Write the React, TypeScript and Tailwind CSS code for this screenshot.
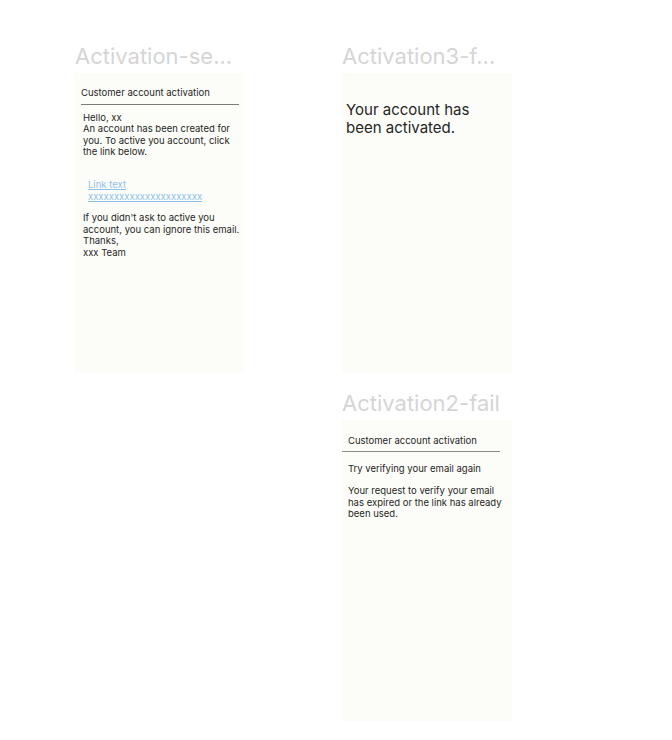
const font = { fontFamily: 'Inter, "Noto Sans", sans-serif' }

const Title = ({ children, className = '' }: { children: string; className?: string }) => (
  <div className={`h-[33px] text-[22px] leading-[33px] text-[#d5d5d5] whitespace-nowrap ${className}`}>
    {children}
  </div>
)

const Frame = ({ children, className = '' }: { children?: React.ReactNode; className?: string }) => (
  <div className={`bg-[#fcfdf8] text-[#262626] ${className}`}>{children}</div>
)

export default function App() {
  return (
    <div className="w-[672px] h-[740px] bg-white flex pt-[40px]" style={font}>
      <div className="ml-[75px] w-[169px] flex flex-col">
        <Title>Activation-se...</Title>
        <Frame className="h-[300px] pt-[14px] text-[9.5px] leading-[11.6px]">
          <div className="ml-[6px] mr-[5px] pb-[5px] border-b border-[#7a7a7a]">
            Customer account activation
          </div>
          <div className="pl-[8px] pr-[4px] pt-[7px]">
            <p>Hello, xx</p>
            <p>An account has been created for you. To active you account, click the link below.</p>
            <div className="mt-[21px] ml-[5px] text-[#8cc2ee] underline leading-[12px]">
              <p>Link text</p>
              <p>xxxxxxxxxxxxxxxxxxxxxx</p>
            </div>
            <p className="mt-[9px]">If you didn't ask to active you account, you can ignore this email.</p>
            <p>Thanks,</p>
            <p>xxx Team</p>
          </div>
        </Frame>
      </div>
      <div className="ml-[98px] w-[170px] flex flex-col">
        <Title>Activation3-f...</Title>
        <Frame className="h-[300px] pt-[28px] pl-[4px] text-[15px] leading-[18px]">
          <p>Your account has</p>
          <p>been activated.</p>
        </Frame>
        <Title className="mt-[14px]">Activation2-fail</Title>
        <Frame className="h-[301px] pt-[15px] text-[9.5px] leading-[11.6px]">
          <div className="mr-[12px] pl-[6px] pb-[4px] border-b border-[#8a8a8a]">
            Customer account activation
          </div>
          <div className="pl-[6px] pr-[4px] pt-[11px]">
            <p>Try verifying your email again</p>
            <p className="mt-[11px]">Your request to verify your email has expired or the link has already been used.</p>
          </div>
        </Frame>
      </div>
    </div>
  )
}
